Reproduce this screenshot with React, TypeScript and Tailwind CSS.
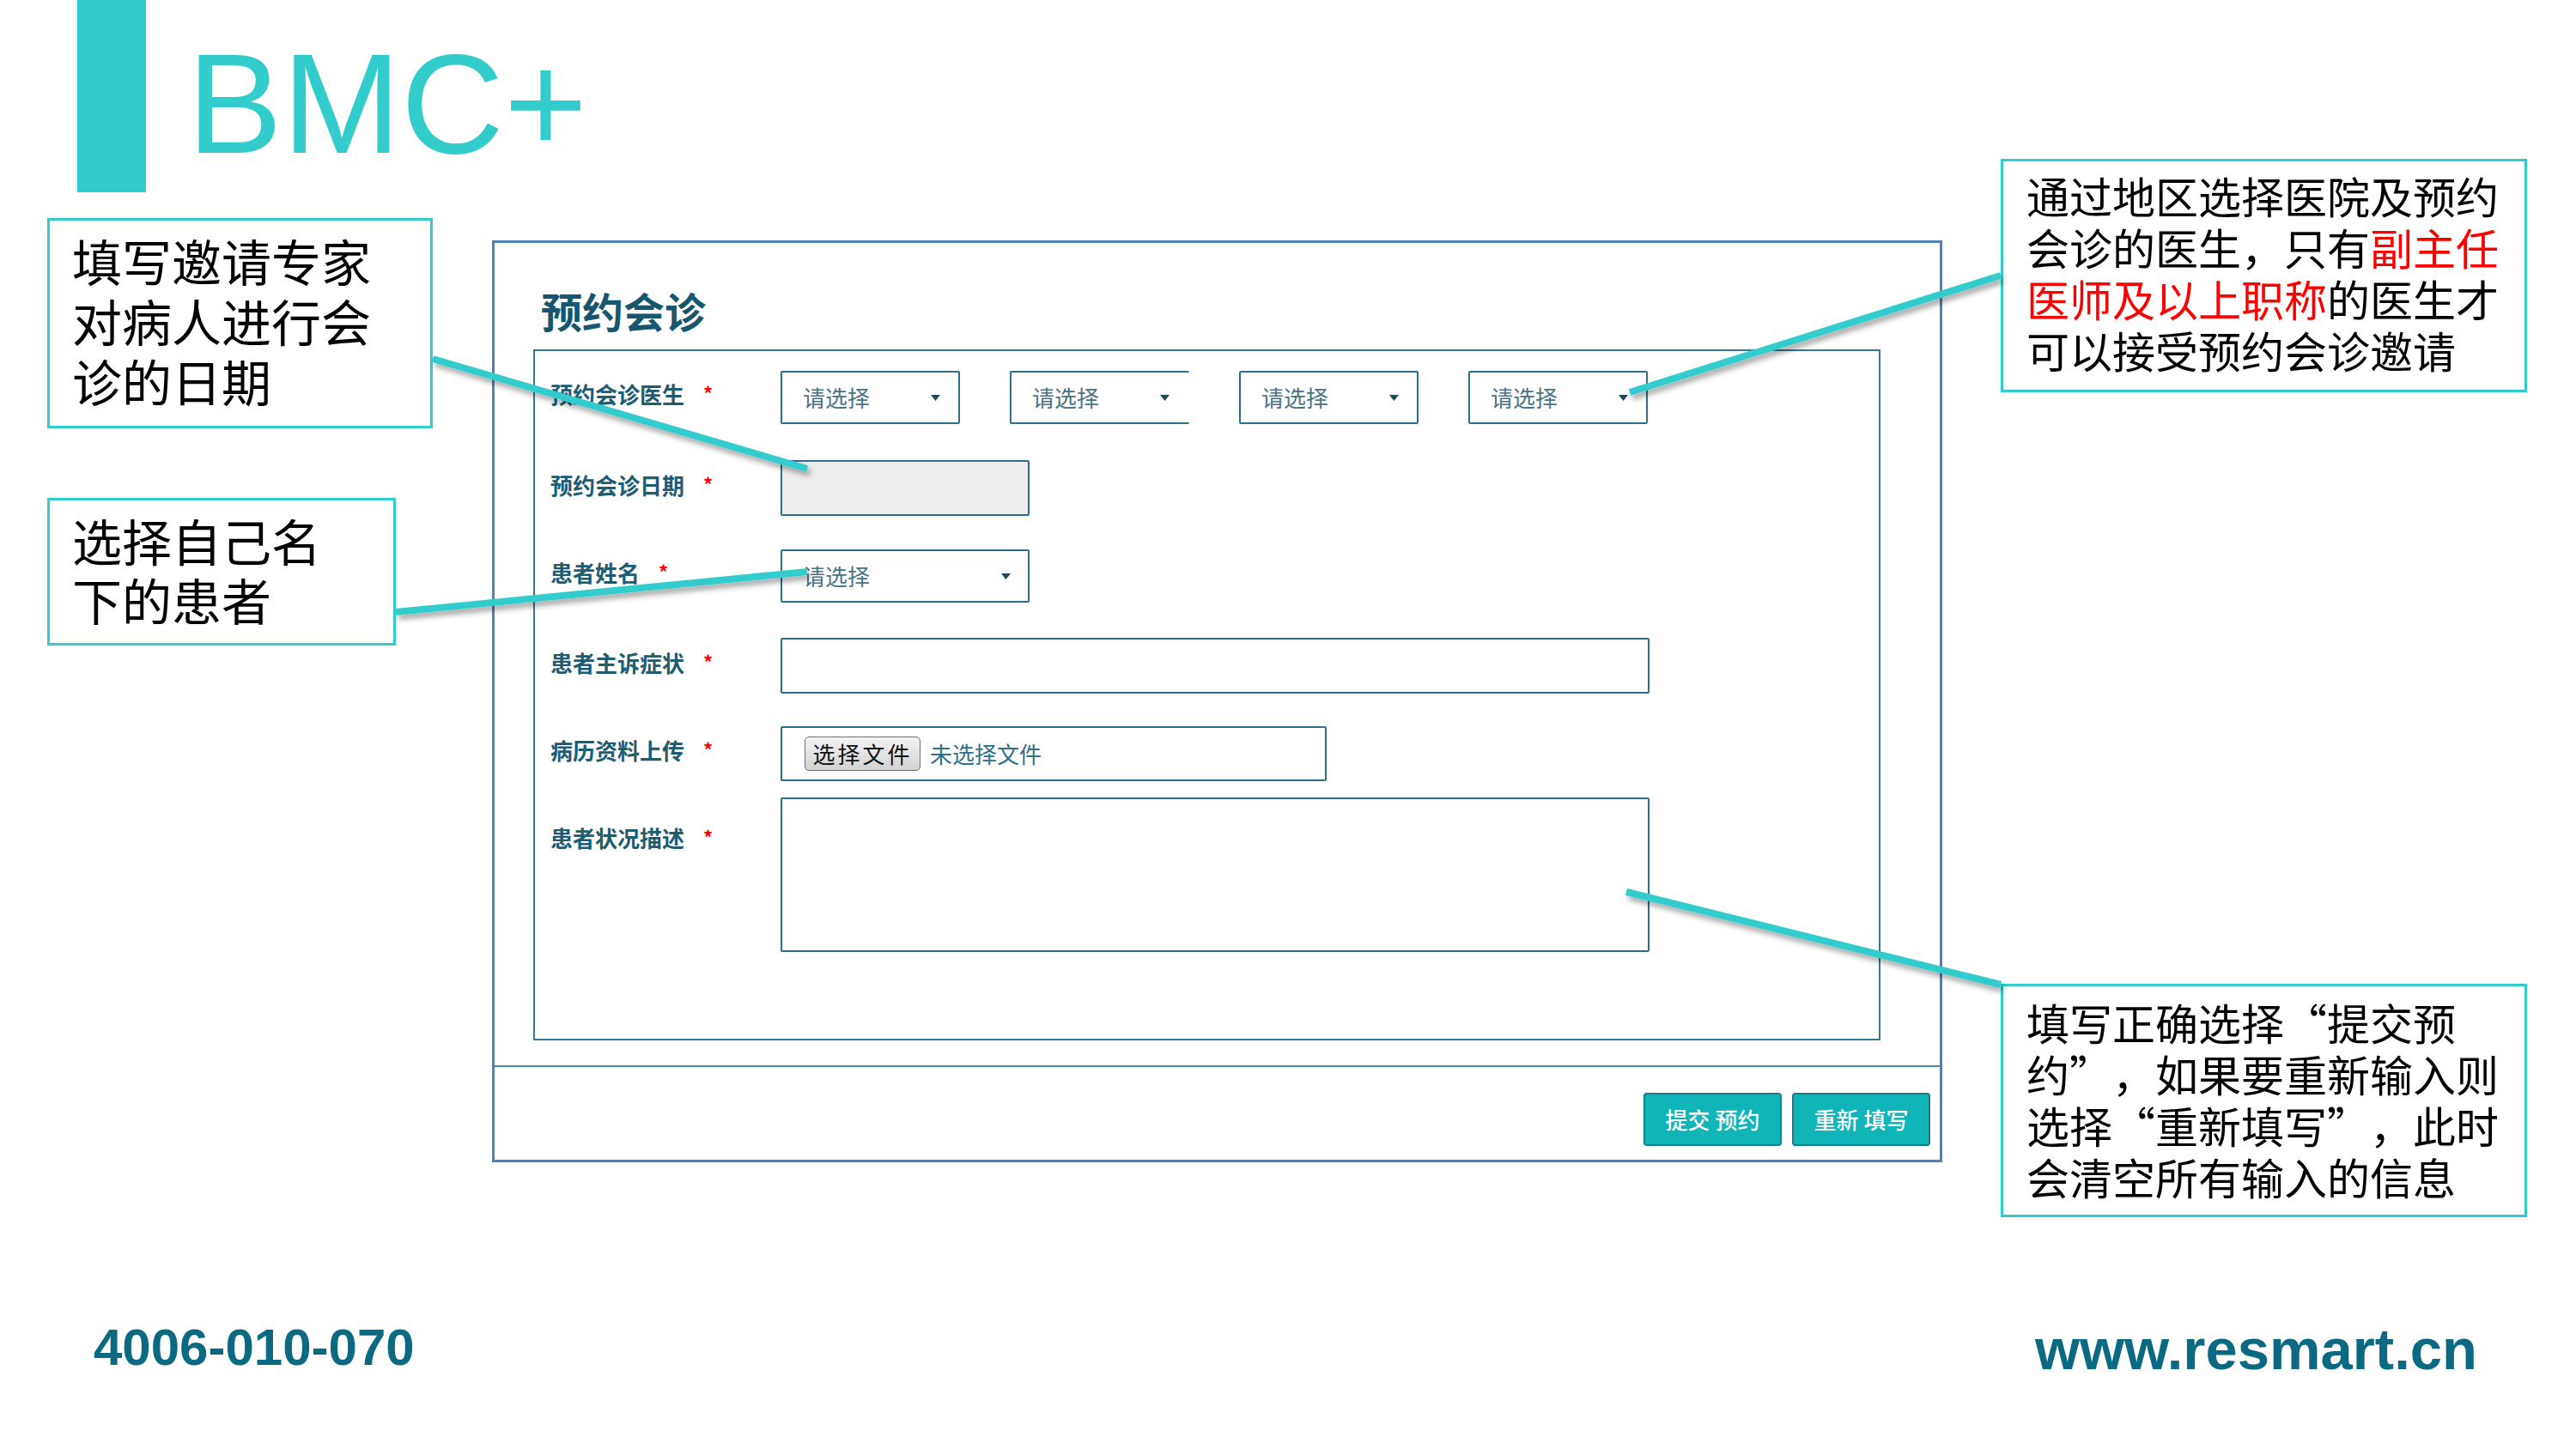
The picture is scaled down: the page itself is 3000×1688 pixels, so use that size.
import React from 'react';

type FieldProps = {
  label: string;
  children: React.ReactNode;
  className?: string;
  labelClassName?: string;
};

function Field({ label, children, className = '', labelClassName = 'h-[64px]' }: FieldProps) {
  return (
    <div className={`flex ${className}`}>
      <div className={`flex w-[268px] shrink-0 items-center ${labelClassName}`}>
        <span className="mb-[8px] text-[26px] font-bold leading-none text-[#1e5c72]">{label}</span>
        <span className="mb-[12px] ml-[22px] text-[22px] font-bold leading-none text-[#ff0000]">*</span>
      </div>
      {children}
    </div>
  );
}

function Caret() {
  return (
    <svg width="11" height="7" viewBox="0 0 11 7" className="shrink-0">
      <polygon points="0,0 11,0 5.5,7" fill="#1e4a5a" />
    </svg>
  );
}

function SelectBox({ className = '' }: { className?: string }) {
  return (
    <div
      className={`flex h-[62px] items-center justify-between rounded-[2px] border-2 border-[#2e7089] bg-white pl-[24px] ${className}`}
    >
      <span className="text-[26px] leading-none text-[#4a7385]">请选择</span>
      <Caret />
    </div>
  );
}

// the form shot sitting in the middle of the slide
function BookingForm() {
  return (
    <div className="ml-[69px] mt-[56px] w-[1689px] border-[3px] border-[#4f81bd] bg-white">
      <h2 className="ml-[54px] mt-[54px] text-[48px] font-bold leading-[48px] text-[#17566e]">预约会诊</h2>

      <div className="ml-[45px] mt-[22px] h-[805px] w-[1569px] border-2 border-[#3a7890] pl-[18px] pt-[22px]">
        <Field label="预约会诊医生" className="items-center">
          <div className="flex gap-[58px]">
            <SelectBox className="w-[209px] pr-[21px]" />
            <SelectBox className="w-[209px] border-r-0 pr-[23px]" />
            <SelectBox className="w-[209px] pr-[21px]" />
            <SelectBox className="w-[209px] pr-[21px]" />
          </div>
        </Field>

        <Field label="预约会诊日期" className="mt-[41px] items-center">
          <div className="h-[65px] w-[290px] rounded-[2px] border-2 border-[#2e7089] bg-[#eeeeee]" />
        </Field>

        <Field label="患者姓名" className="mt-[38px] items-center">
          <SelectBox className="w-[290px] pr-[20px]" />
        </Field>

        <Field label="患者主诉症状" className="mt-[40px] items-center">
          <div className="h-[65px] w-[1012px] rounded-[2px] border-2 border-[#2e7089] bg-white" />
        </Field>

        <Field label="病历资料上传" className="mt-[38px] items-center">
          <div className="flex h-[64px] w-[636px] items-center rounded-[2px] border-2 border-[#2e7089] bg-white pl-[26px]">
            <div className="flex h-[40px] w-[135px] items-center justify-center rounded-[5px] border border-[#707070] bg-gradient-to-b from-[#f4f4f4] to-[#d2d2d2] text-[26px] leading-none tracking-[3px] text-[#111111]">
              选择文件
            </div>
            <span className="ml-[11px] text-[26px] leading-none text-[#2f6f87]">未选择文件</span>
          </div>
        </Field>

        <Field label="患者状况描述" className="mt-[19px] items-start" labelClassName="h-[64px] mt-[19px]">
          <div className="h-[180px] w-[1012px] rounded-[2px] border-2 border-[#2e7089] bg-white" />
        </Field>
      </div>

      <div className="mt-[29px] h-[2px] bg-[#4f8aa3]" />

      <div className="mb-[16px] mr-[11px] mt-[30px] flex justify-end gap-[12px]">
        {['提交 预约', '重新 填写'].map((t) => (
          <button
            key={t}
            className="flex h-[62px] w-[161px] items-center justify-center whitespace-pre rounded-[4px] border-2 border-[#137f8a] bg-[#0fb5b8] text-[26px] font-medium leading-none text-white"
          >
            {t}
          </button>
        ))}
      </div>
    </div>
  );
}

function Connectors() {
  const lines = [
    [504, 418, 940, 546],
    [461, 713, 940, 666],
    [2330, 321, 1898, 457],
    [2330, 1147, 1894, 1039],
  ];
  return (
    <svg
      className="pointer-events-none absolute inset-0"
      width="3000"
      height="1688"
      viewBox="0 0 3000 1688"
    >
      <defs>
        <filter id="lineShadow" x="-10%" y="-50%" width="120%" height="200%">
          <feDropShadow dx="3" dy="5" stdDeviation="3" floodColor="#000000" floodOpacity="0.35" />
        </filter>
      </defs>
      {lines.map(([x1, y1, x2, y2], i) => (
        <line
          key={i}
          x1={x1}
          y1={y1}
          x2={x2}
          y2={y2}
          stroke="#33cccc"
          strokeWidth="8"
          filter="url(#lineShadow)"
        />
      ))}
    </svg>
  );
}

export default function App() {
  return (
    <div className="relative h-[1688px] w-[3000px] overflow-hidden bg-white font-['Noto_Sans_CJK_SC',sans-serif] [text-spacing-trim:space-all]">
      <div className="flex items-start">
        <div className="flex flex-col">
          <header className="flex h-[224px] items-start">
            <div className="ml-[90px] h-full w-[80px] bg-[#33cccc]" />
            <h1 className="ml-[48px] mt-[38px] font-['Liberation_Sans',Arial,sans-serif] text-[166px] leading-none text-[#33cccc]">
              BMC+
            </h1>
          </header>

          <div className="flex items-start">
            <div className="ml-[55px] mt-[30px] flex w-[449px] flex-col">
              <div className="h-[245px] w-[449px] border-[3px] border-[#33cccc] bg-white pl-[26px] pt-[11px] text-[58px] leading-[70px] text-black">
                <div>填写邀请专家</div>
                <div>对病人进行会</div>
                <div>诊的日期</div>
              </div>
              <div className="mt-[81px] h-[172px] w-[406px] border-[3px] border-[#33cccc] bg-white pl-[26px] pt-[12px] text-[58px] leading-[69px] text-black">
                <div>选择自己名</div>
                <div>下的患者</div>
              </div>
            </div>

            <BookingForm />
          </div>
        </div>

        <aside className="ml-[68px] flex w-[613px] flex-col pt-[185px]">
          <div className="h-[272px] border-[3px] border-[#33cccc] bg-white pl-[27px] pt-[9px] text-[50px] leading-[60px] text-black">
            <div className="whitespace-nowrap">通过地区选择医院及预约</div>
            <div className="whitespace-nowrap">
              会诊的医生，只有<span className="text-[#ff0000]">副主任</span>
            </div>
            <div className="whitespace-nowrap">
              <span className="text-[#ff0000]">医师及以上职称</span>的医生才
            </div>
            <div className="whitespace-nowrap">可以接受预约会诊邀请</div>
          </div>
          <div className="mt-[689px] h-[272px] border-[3px] border-[#33cccc] bg-white pl-[27px] pt-[11px] text-[50px] leading-[60px] text-black">
            <div className="whitespace-nowrap">填写正确选择“提交预</div>
            <div className="whitespace-nowrap">约”，如果要重新输入则</div>
            <div className="whitespace-nowrap">选择“重新填写”，此时</div>
            <div className="whitespace-nowrap">会清空所有输入的信息</div>
          </div>
        </aside>
      </div>

      <footer className="mt-[120px] flex items-start justify-between pl-[109px] pr-[115px] font-['Liberation_Sans',Arial,sans-serif] font-bold text-[#0b6a82]">
        <span className="mt-[2px] text-[60px] leading-none">4006-010-070</span>
        <span className="text-[67px] leading-none">www.resmart.cn</span>
      </footer>

      <Connectors />
    </div>
  );
}
